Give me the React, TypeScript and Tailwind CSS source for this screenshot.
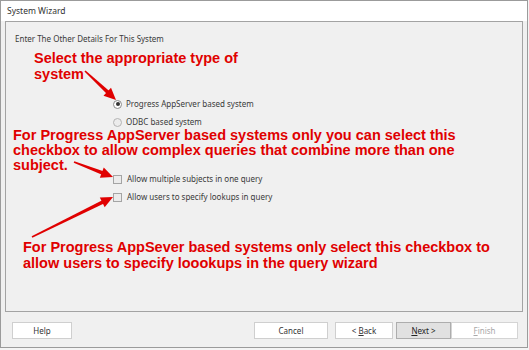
import React from "react";

const RED = "#e00000";

function Arrow({ x1, y1, x2, y2 }: { x1: number; y1: number; x2: number; y2: number }) {
  const dx = x2 - x1;
  const dy = y2 - y1;
  const len = Math.hypot(dx, dy);
  const ux = dx / len;
  const uy = dy / len;
  const nx = -uy;
  const ny = ux;
  const L = 12;
  const W = 5.5;
  const bx = x2 - ux * L;
  const by = y2 - uy * L;
  const shaft = [
    [x1 + nx * 0.8, y1 + ny * 0.8],
    [bx + ux + nx * 1.9, by + uy + ny * 1.9],
    [bx + ux - nx * 1.9, by + uy - ny * 1.9],
    [x1 - nx * 0.8, y1 - ny * 0.8],
  ];
  const head = [
    [x2, y2],
    [bx + nx * W, by + ny * W],
    [bx - nx * W, by - ny * W],
  ];
  const pts = (p: number[][]) => p.map((q) => q.join(",")).join(" ");
  return (
    <g fill={RED}>
      <polygon points={pts(shaft)} />
      <polygon points={pts(head)} />
    </g>
  );
}

function Radio({ checked, label }: { checked?: boolean; label: string }) {
  return (
    <div className="h-[12px] flex items-center gap-[4px]">
      <span
        className={
          checked
            ? "w-[9px] h-[9px] rounded-full border border-[#8a8a8a] bg-white flex items-center justify-center"
            : "w-[9px] h-[9px] rounded-full border border-[#b4b4b4] bg-[#ececec]"
        }
      >
        {checked && <span className="w-[4px] h-[4px] rounded-full bg-[#333]" />}
      </span>
      <span>{label}</span>
    </div>
  );
}

function Check({ label }: { label: string }) {
  return (
    <div className="h-[12px] flex items-center gap-[5px]">
      <span className="w-[9px] h-[9px] border border-[#a4a4a4] bg-[#ebebeb]" />
      <span>{label}</span>
    </div>
  );
}

function Btn({ w, cls, children }: { w: string; cls?: string; children: React.ReactNode }) {
  return (
    <div className={`${w} h-[17px] flex items-center justify-center border ${cls ?? "bg-white border-[#cfcfcf] text-[#333]"}`}>
      {children}
    </div>
  );
}

export default function App() {
  const red = "font-['Liberation_Sans',Arial,sans-serif] font-bold text-[14.5px] text-[#e00000]";
  return (
    <div className="relative w-[529px] h-[350px] bg-[#f4f4f4] font-['Noto_Sans',sans-serif] text-[8px] text-[#3a3a3a]">
      <div className="w-[528px] h-[348px] border border-[#9b9b9b] bg-[#f0f0f0] flex flex-col">
        <div className="h-[20px] bg-white flex items-center pl-[6px] text-[8.5px] text-[#333]">System Wizard</div>

        <div className="mx-[4px] h-[291px] border border-[#a3a3a3] flex flex-col">
          <div className="mt-[11px] ml-[9px] leading-[11px]">Enter The Other Details For This System</div>

          <p className={`mt-[6px] ml-[28px] leading-[16px] ${red}`}>
            Select the appropriate type of
            <br />
            system
          </p>

          <div className="mt-[16px] ml-[107px] flex flex-col gap-[6px]">
            <Radio checked label="Progress AppServer based system" />
            <Radio label="ODBC based system" />
          </div>

          <p className={`ml-[7px] leading-[15px] ${red}`}>
            For Progress AppServer based systems only you can select this
            <br />
            checkbox to allow complex queries that combine more than one
            <br />
            subject.
          </p>

          <div className="ml-[107px] flex flex-col gap-[6px]">
            <Check label="Allow multiple subjects in one query" />
            <Check label="Allow users to specify lookups in query" />
          </div>

          <p className={`mt-[36px] ml-[17px] leading-[16px] ${red}`}>
            For Progress AppSever based systems only select this checkbox to
            <br />
            allow users to specify loookups in the query wizard
          </p>
        </div>

        <div className="flex-1 flex items-start pt-[10px] pl-[11px] pr-[9px]">
          <Btn w="w-[60px]">Help</Btn>
          <div className="ml-auto flex">
            <Btn w="w-[74px]">Cancel</Btn>
            <Btn w="w-[58px] ml-[7px]">
              &lt;&nbsp;<span className="underline">B</span>ack
            </Btn>
            <Btn w="w-[55px] ml-[3px]" cls="bg-[#e1e1e1] border-[#adadad] text-[#222]">
              <span className="underline">N</span>ext &gt;
            </Btn>
            <Btn w="w-[67px]" cls="bg-white border-[#d4d4d4] text-[#a8a8a8]">
              <span className="underline">F</span>inish
            </Btn>
          </div>
        </div>
      </div>

      <svg className="absolute inset-0 pointer-events-none" width={529} height={350}>
        <Arrow x1={85} y1={71} x2={116} y2={100} />
        <Arrow x1={74} y1={162} x2={113} y2={177} />
        <Arrow x1={32} y1={237} x2={113} y2={197} />
      </svg>
    </div>
  );
}
